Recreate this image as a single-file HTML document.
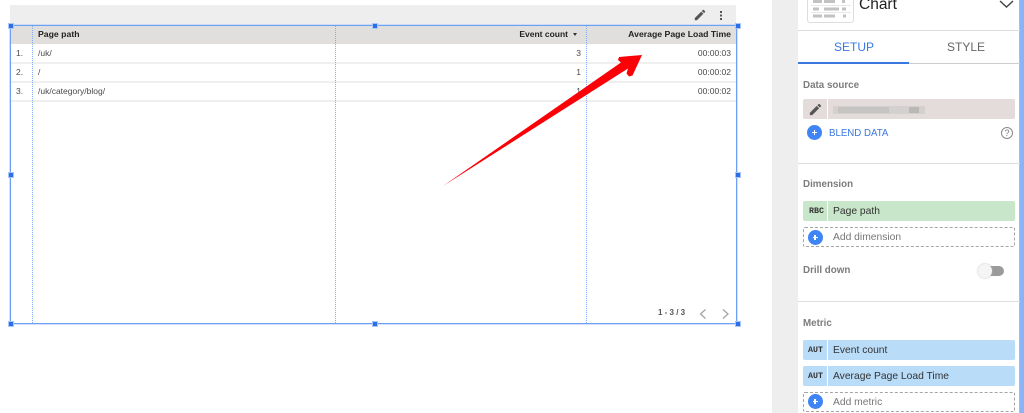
<!DOCTYPE html>
<html><head><meta charset="utf-8"><style>
html,body{margin:0;padding:0;background:#fff}
body{position:relative;width:1024px;height:413px;overflow:hidden;font-family:"Liberation Sans",sans-serif;color:#222}
.a,.t{position:absolute}
.t{white-space:nowrap;line-height:12px}
.cell{font-size:8.5px;color:#4a4a4a}
.h{font-size:8.7px;font-weight:bold;color:#222}
.r{text-align:right}
.hl{position:absolute;left:11px;width:725px;height:2px;background:#efefef}
.vd{position:absolute;top:25px;height:298px;border-left:1px dotted #80abf6;width:0}
.hd{position:absolute;width:4px;height:4px;background:#2a6fe8;border:1px solid #a9c6f8}
.lab{font-size:9.8px;font-weight:bold;color:#7c7c7c}
.pill{position:absolute;left:803px;width:212px;border-radius:2px}
.sep{position:absolute;left:827px;width:1px;background:#fff}
.ft{font-size:10.3px;color:#333}
.dash{position:absolute;left:803px;width:210px;height:18px;border:1px dashed #a5a5a5;border-radius:2px}
.plus{position:absolute;left:807.5px;width:15px;height:15px;border-radius:50%;background:#3f85f5;color:#fff}
.plus:before{content:"";position:absolute;left:5px;top:7px;width:5px;height:1.4px;background:#fff}
.plus:after{content:"";position:absolute;left:6.8px;top:5px;width:1.4px;height:5px;background:#fff}
.tag{font-size:8.3px;font-weight:bold;color:#333;font-family:"Liberation Mono",monospace}
</style></head><body>
<div class="a" style="left:10px;top:5px;width:726px;height:20px;background:#eee"></div>
<svg class="a" style="left:693px;top:8px" width="14" height="14" viewBox="0 0 24 24"><path fill="#555" d="M3 17.25V21h3.75L17.8 9.94l-3.75-3.75L3 17.25zM20.7 7.04a1 1 0 0 0 0-1.41l-2.34-2.34a1 1 0 0 0-1.41 0l-1.83 1.83 3.75 3.75 1.83-1.83z"/></svg>
<div class="a" style="left:719.5px;top:11px;width:2px;height:2px;background:#555;box-shadow:0 3.5px #555,0 7px #555"></div>

<div class="a" style="left:11px;top:26px;width:725px;height:18px;background:#e0dfdd"></div>
<div class="hl" style="top:62px"></div>
<div class="hl" style="top:81px"></div>
<div class="hl" style="top:100px"></div>
<div class="t h" style="left:38px;top:28px">Page path</div>
<div class="t h r" style="right:456px;top:28px;font-size:8.5px">Event count</div>
<div class="a" style="left:573px;top:33px;border:2.5px solid transparent;border-top:3px solid #333;border-bottom:0"></div>
<div class="t h r" style="right:293px;top:28px">Average Page Load Time</div>

<div class="t cell" style="left:16px;top:47px">1.</div><div class="t cell" style="left:38px;top:47px">/uk/</div><div class="t cell r" style="right:443px;top:47px">3</div><div class="t cell r" style="right:293px;top:47px">00:00:03</div>
<div class="t cell" style="left:16px;top:66px">2.</div><div class="t cell" style="left:38px;top:66px">/</div><div class="t cell r" style="right:443px;top:66px">1</div><div class="t cell r" style="right:293px;top:66px">00:00:02</div>
<div class="t cell" style="left:16px;top:85px">3.</div><div class="t cell" style="left:38px;top:85px">/uk/category/blog/</div><div class="t cell r" style="right:443px;top:85px">1</div><div class="t cell r" style="right:293px;top:85px">00:00:02</div>

<div class="vd" style="left:32px"></div><div class="vd" style="left:335px"></div><div class="vd" style="left:586px"></div>
<div class="a" style="left:10px;top:25px;width:725px;height:297px;border:1px solid #6d9ff2;box-shadow:0 0 0 .6px #b5cff9"></div>
<div class="hd" style="left:8px;top:23px"></div><div class="hd" style="left:372px;top:23px"></div><div class="hd" style="left:735px;top:23px"></div>
<div class="hd" style="left:8px;top:172px"></div><div class="hd" style="left:735px;top:172px"></div>
<div class="hd" style="left:8px;top:321px"></div><div class="hd" style="left:372px;top:321px"></div><div class="hd" style="left:735px;top:321px"></div>

<div class="t" style="left:658px;top:307px;font-size:8px;font-weight:bold;color:#555">1 - 3 / 3</div>
<svg class="a" style="left:696px;top:307px" width="40" height="14" fill="none" stroke="#a5a5a5" stroke-width="1.3"><path d="M9.5 2.5L4.5 7l5 4.5M27 2.5L32 7l-5 4.5"/></svg>

<svg class="a" style="left:0;top:0" width="1024" height="413"><path fill="#fb0007" d="M443 186L621 62.500L618 60L619 57L642 55L632.500 75.500L629 76.500L626.500 73.500L628 68.500Z"/></svg>

<div class="a" style="left:772px;top:0;width:26px;height:413px;background:#eee"></div>
<div class="a" style="left:798px;top:0;width:222px;height:413px;background:#fff;border-right:1px solid #bbb;box-sizing:border-box"></div>
<div class="a" style="left:1020px;top:0;width:4px;height:413px;background:#8ab4f8"></div>

<div class="a" style="left:807px;top:-6px;width:45px;height:27px;border:1px solid #ddd;border-radius:3px;background:#fff"></div>
<svg class="a" style="left:811px;top:0" width="40" height="18"><g fill="#c2c2c2"><rect x="2" y="0" width="9" height="3"/><rect x="13" y="0" width="11" height="3"/><rect x="31" y="0" width="3" height="3"/><rect x="2" y="7.500" width="6" height="3"/><rect x="13" y="7.500" width="15" height="3"/><rect x="31" y="7.500" width="4" height="3"/><rect x="2" y="14.500" width="9" height="3"/><rect x="13" y="14.500" width="11" height="3"/><rect x="32" y="14.500" width="3" height="3"/></g><path stroke="#e8e8e8" d="M0 5.500H40M0 12.500H40"/></svg>
<div class="t" style="left:859px;top:-5px;font-size:15.500px;line-height:20px;color:#222">Chart</div>
<svg class="a" style="left:999px;top:0" width="16" height="10" fill="none" stroke="#444" stroke-width="1.400"><path d="M1 1l6.500 6L14 1"/></svg>

<div class="a" style="left:798px;top:30px;width:222px;height:1px;background:#ddd"></div>
<div class="t" style="left:834px;top:40px;font-size:12px;line-height:14px;color:#3a78e0">SETUP</div>
<div class="t" style="left:947px;top:40px;font-size:12px;line-height:14px;color:#666">STYLE</div>
<div class="a" style="left:798px;top:63px;width:222px;height:1px;background:#ccc"></div>
<div class="a" style="left:798px;top:62px;width:111px;height:2px;background:#3a78e0"></div>

<div class="t lab" style="left:803px;top:80px">Data source</div>
<div class="pill" style="top:99px;height:20px;background:#e3dcda"></div>
<div class="sep" style="top:99px;height:20px"></div>
<svg class="a" style="left:808px;top:102px" width="15" height="15" viewBox="0 0 24 24"><path fill="#555" d="M3 17.25V21h3.75L17.8 9.94l-3.75-3.75L3 17.25zM20.7 7.04a1 1 0 0 0 0-1.41l-2.34-2.34a1 1 0 0 0-1.41 0l-1.83 1.83 3.75 3.75 1.83-1.83z"/></svg>
<div class="a" style="left:833px;top:106px;width:92px;height:8px;background:#d4d0cf"></div>
<div class="a" style="left:838px;top:107px;width:51px;height:6px;background:#c6c4c3"></div>
<div class="a" style="left:909px;top:107px;width:10px;height:6px;background:#bab8b7"></div>
<div class="plus" style="top:125px;left:807px"></div>
<div class="t" style="left:829px;top:128px;font-size:9.700px;color:#3a78e0">BLEND DATA</div>
<div class="a" style="left:1001px;top:127px;width:10px;height:10px;border:1px solid #888;border-radius:50%;font-size:9px;line-height:10px;text-align:center;color:#777">?</div>
<div class="a" style="left:798px;top:163px;width:222px;height:1px;background:#ddd"></div>

<div class="t lab" style="left:803px;top:179px">Dimension</div>
<div class="pill" style="top:201px;height:20px;background:#c8e6c9"></div>
<div class="sep" style="top:201px;height:20px"></div>
<div class="t tag" style="left:809px;top:206px">RBC</div>
<div class="t ft" style="left:833px;top:206px">Page path</div>
<div class="dash" style="top:227px"></div>
<div class="plus" style="top:230px"></div>
<div class="t ft" style="left:833px;top:232px;color:#777">Add dimension</div>
<div class="t lab" style="left:803px;top:265px">Drill down</div>
<div class="a" style="left:985px;top:265.500px;width:19px;height:10px;border-radius:5px;background:#9b9b9b"></div>
<div class="a" style="left:978px;top:263.500px;width:14px;height:14px;border-radius:50%;background:#f5f5f5;box-shadow:0 0 2px #bbb"></div>
<div class="a" style="left:798px;top:301px;width:222px;height:1px;background:#ddd"></div>

<div class="t lab" style="left:803px;top:318px">Metric</div>
<div class="pill" style="top:340px;height:20px;background:#b9dcf9"></div>
<div class="sep" style="top:340px;height:20px"></div>
<div class="t tag" style="left:808px;top:345px">AUT</div>
<div class="t ft" style="left:833px;top:345px">Event count</div>
<div class="pill" style="top:366px;height:20px;background:#b9dcf9"></div>
<div class="sep" style="top:366px;height:20px"></div>
<div class="t tag" style="left:808px;top:371px">AUT</div>
<div class="t ft" style="left:833px;top:371px">Average Page Load Time</div>
<div class="dash" style="top:392px"></div>
<div class="plus" style="top:394px"></div>
<div class="t ft" style="left:833px;top:397px;color:#777">Add metric</div>
</body></html>
